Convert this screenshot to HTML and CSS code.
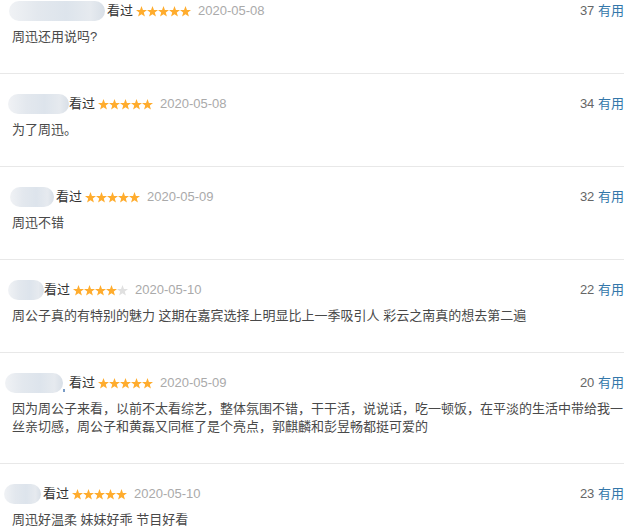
FILE: index.html
```html
<!DOCTYPE html>
<html lang="zh-CN">
<head>
<meta charset="utf-8">
<link rel="stylesheet" href="styles.css">
</head>
<body>
<svg class="defs" width="0" height="0" aria-hidden="true">
  <defs>
    <symbol id="star" viewBox="0 0 11 11">
      <polygon points="5.5,0 6.95,3.9 11,4.05 7.8,6.55 8.9,10.6 5.5,8.25 2.1,10.6 3.2,6.55 0,4.05 4.05,3.9"/>
    </symbol>
  </defs>
</svg>
<div class="list">
  <div class="item">
    <div class="head">
      <span class="pill p1"></span><span class="watched">看过</span>
      <span class="stars"><svg><use href="#star"/></svg><svg><use href="#star"/></svg><svg><use href="#star"/></svg><svg><use href="#star"/></svg><svg><use href="#star"/></svg></span>
      <span class="date">2020-05-08</span>
      <span class="votes"><b>37</b> <a>有用</a></span>
    </div>
    <p class="text">周迅还用说吗?</p>
  </div>
  <div class="item">
    <div class="head">
      <span class="pill p2"></span><span class="watched">看过</span>
      <span class="stars"><svg><use href="#star"/></svg><svg><use href="#star"/></svg><svg><use href="#star"/></svg><svg><use href="#star"/></svg><svg><use href="#star"/></svg></span>
      <span class="date">2020-05-08</span>
      <span class="votes"><b>34</b> <a>有用</a></span>
    </div>
    <p class="text">为了周迅。</p>
  </div>
  <div class="item">
    <div class="head">
      <span class="pill p3"></span><span class="watched">看过</span>
      <span class="stars"><svg><use href="#star"/></svg><svg><use href="#star"/></svg><svg><use href="#star"/></svg><svg><use href="#star"/></svg><svg><use href="#star"/></svg></span>
      <span class="date">2020-05-09</span>
      <span class="votes"><b>32</b> <a>有用</a></span>
    </div>
    <p class="text">周迅不错</p>
  </div>
  <div class="item">
    <div class="head">
      <span class="pill p4"></span><span class="watched">看过</span>
      <span class="stars"><svg><use href="#star"/></svg><svg><use href="#star"/></svg><svg><use href="#star"/></svg><svg><use href="#star"/></svg><svg class="off"><use href="#star"/></svg></span>
      <span class="date">2020-05-10</span>
      <span class="votes"><b>22</b> <a>有用</a></span>
    </div>
    <p class="text">周公子真的有特别的魅力 这期在嘉宾选择上明显比上一季吸引人 彩云之南真的想去第二遍</p>
  </div>
  <div class="item">
    <div class="head">
      <span class="pill p5"></span><span class="dot"></span><span class="watched">看过</span>
      <span class="stars"><svg><use href="#star"/></svg><svg><use href="#star"/></svg><svg><use href="#star"/></svg><svg><use href="#star"/></svg><svg><use href="#star"/></svg></span>
      <span class="date">2020-05-09</span>
      <span class="votes"><b>20</b> <a>有用</a></span>
    </div>
    <p class="text">因为周公子来看，以前不太看综艺，整体氛围不错，干干活，说说话，吃一顿饭，在平淡的生活中带给我一丝亲切感，周公子和黄磊又同框了是个亮点，郭麒麟和彭昱畅都挺可爱的</p>
  </div>
  <div class="item">
    <div class="head">
      <span class="pill p6"></span><span class="watched">看过</span>
      <span class="stars"><svg><use href="#star"/></svg><svg><use href="#star"/></svg><svg><use href="#star"/></svg><svg><use href="#star"/></svg><svg><use href="#star"/></svg></span>
      <span class="date">2020-05-10</span>
      <span class="votes"><b>23</b> <a>有用</a></span>
    </div>
    <p class="text">周迅好温柔 妹妹好乖 节目好看</p>
  </div>
</div>
</body>
</html>
```
FILE: styles.css
```css
html, body {
  margin: 0;
  padding: 0;
  background: #fff;
}
body {
  font-family: "Liberation Sans", "Noto Sans CJK SC", sans-serif;
  font-size: 13px;
  color: #494949;
  overflow: hidden;
}
.defs {
  position: absolute;
  width: 0;
  height: 0;
}
.list {
  width: 624px;
  margin-top: -19px;
}
.item {
  padding: 20px 0 27px 0;
  border-bottom: 1px solid #e8e8e8;
}
.head {
  display: flex;
  align-items: center;
  height: 20px;
  line-height: 20px;
  padding-left: 12px;
}
.pill {
  display: block;
  height: 20px;
  border-radius: 10px;
  background: linear-gradient(90deg, #f0f2f5 0%, #e3e8ee 30%, #dde4ec 60%, #e6eaef 85%, #d8dfe7 100%);
  filter: blur(0.6px);
  margin-right: 2px;
  flex: none;
}
.p1 { width: 96px; margin-left: -3px; }
.p2 { width: 61px; margin-left: -4px; margin-right: 0; }
.p3 { width: 44px; margin-left: -2px; }
.p4 { width: 36px; margin-left: -4px; margin-right: 0; }
.p5 { width: 58px; margin-left: -7px; margin-right: 0; }
.p6 { width: 37px; margin-left: -8px; margin-right: 2px; }
.dot {
  width: 2px;
  height: 3px;
  background: #7a9cc6;
  align-self: flex-end;
  margin: 0 4px 1px 0;
}
.watched {
  color: #333;
  margin-right: 3px;
}
.stars {
  display: flex;
  align-items: center;
  fill: #ffac2d;
  margin-right: 7px;
}
.stars svg {
  width: 11px;
  height: 11px;
  display: block;
}
.stars svg.off {
  fill: #e0e0e0;
}
.date {
  color: #aaa;
}
.votes {
  margin-left: auto;
  color: #666;
}
.votes b {
  font-weight: normal;
}
.votes a {
  color: #37a;
}
.text {
  margin: 7px 0 0 0;
  padding-left: 12px;
  line-height: 18px;
  word-break: break-all;
}
```
